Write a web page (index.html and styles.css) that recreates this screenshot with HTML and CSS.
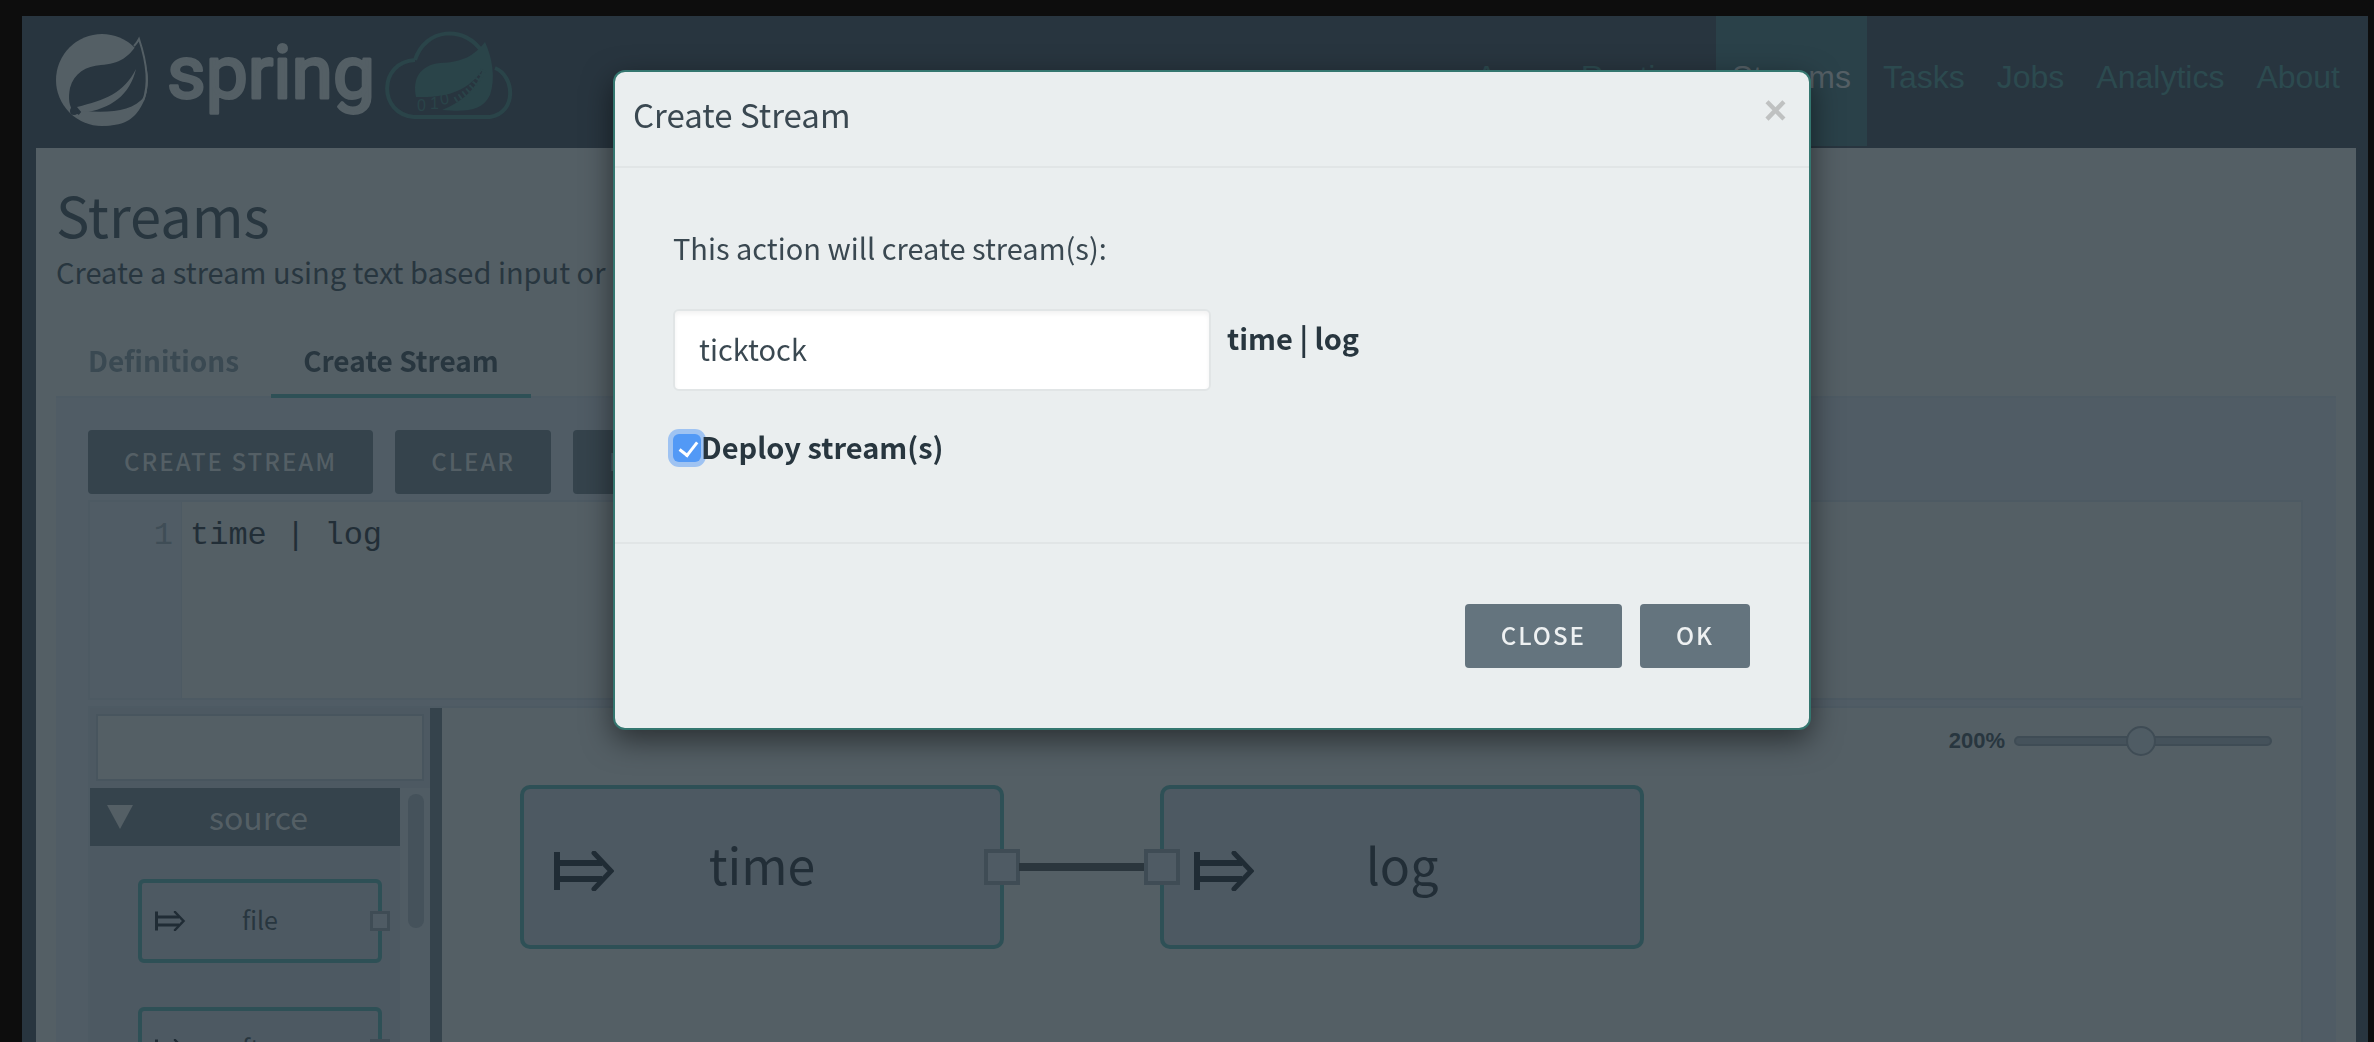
FILE: index.html
```
<!DOCTYPE html>
<html lang="en">
<head>
    <meta charset="UTF-8">
    <meta name="viewport" content="width=device-width, initial-scale=1.0">
    <title>Streams</title>
    <link rel="stylesheet" href="styles.css">
</head>
<body>
    <svg class="symbols" aria-hidden="true">
        <symbol id="arrow" viewBox="0 0 60 40">
            <path d="M3 1v38M3 12h45M3 28h45" fill="none" stroke="currentColor" stroke-width="6"/>
            <path d="M40 2l17 18-17 18" fill="none" stroke="currentColor" stroke-width="5" stroke-linecap="round"/>
        </symbol>
    </svg>

    <div class="app">
        <header class="navbar">
            <a href="#" class="brand" aria-label="spring">
                <svg width="470" height="100" viewBox="52 30 470 100">
                    <circle cx="102" cy="80" r="46" class="logo-fill"/>
                    <path class="logo-bg" d="M139 41c8 22 12 46 2 63-9 13-28 15-57 14l-10-6c-5-5-6-14-4-24 4-15 16-22 31-23 18-1 29-8 38-24z"/>
                    <path class="logo-line" d="M134 46q3-3 5-7c7 21 11 44 4 62"/>
                    <path class="logo-fill" d="M77 107c28-7 47-14 59-38-6 26-25 40-54 44z"/>
                    <path class="logo-fill" d="M82 111c28 2 50 1 63-15l2-8c0 10-8 26-18 32-13 8-37 8-52-3z"/>
                    <circle cx="74" cy="111" r="4" class="logo-bg"/>
                    <text x="167" y="98" class="logo-text">spring</text>
                    <g transform="translate(2 3)">
                        <path class="cloud-line" d="M413 57c10-32 50-36 68-7m12 15c20 8 22 45-5 49h-76c-36-3-36-55 1-57"/>
                        <path class="cloud-fill" d="M414 94c-4-18 4-32 24-34 23-1 34-7 45-21 7 15 11 36 5 53-8 16-23 17-48 15 22-9 35-22 41-41-15 22-35 29-67 28z"/>
                        <g class="cloud-digits">
                            <text x="415" y="108">0</text>
                            <text x="428" y="106">1</text>
                            <text x="439" y="102" transform="rotate(-10 439 102)">0</text>
                        </g>
                        <path class="digits-line" d="M453 97q20-12 29-31"/>
                    </g>
                </svg>
            </a>
            <nav class="menu">
                <a href="#">Apps</a>
                <a href="#">Runtime</a>
                <a href="#" class="active">Streams</a>
                <a href="#">Tasks</a>
                <a href="#">Jobs</a>
                <a href="#">Analytics</a>
                <a href="#">About</a>
            </nav>
        </header>

        <main class="content">
            <h1>Streams</h1>
            <p class="subtitle">Create a stream using text based input or</p>

            <div class="tabs">
                <a href="#" class="tab">Definitions</a>
                <a href="#" class="tab selected">Create Stream</a>
            </div>

            <div class="panel">
                <div class="toolbar">
                    <button class="btn">CREATE STREAM</button>
                    <button class="btn">CLEAR</button>
                    <button class="btn">LAYOUT</button>
                </div>

                <div class="editor">
                    <div class="gutter">1</div>
                    <pre class="code">time | log</pre>
                </div>

                <div class="designer">
                    <aside class="palette">
                        <div class="filter"><input type="text" aria-label="Filter"></div>
                        <div class="palette-body">
                            <div class="palette-list">
                                <div class="group">
                                    <svg width="26" height="24"><path d="M0 0h26L13 24z" fill="currentColor"/></svg>
                                    <span>source</span>
                                </div>
                                <div class="app-item">
                                    <svg class="arrow" width="32" height="20"><use href="#arrow"/></svg>
                                    <span>file</span>
                                    <i class="port"></i>
                                </div>
                                <div class="app-item">
                                    <svg class="arrow" width="32" height="20"><use href="#arrow"/></svg>
                                    <span>ftp</span>
                                    <i class="port"></i>
                                </div>
                            </div>
                            <div class="scroll"></div>
                        </div>
                    </aside>
                    <div class="splitter"></div>
                    <div class="canvas">
                        <div class="zoom">
                            <label for="zoom">200%</label>
                            <input type="range" id="zoom" min="0" max="100" value="49">
                        </div>
                        <div class="node node-time">
                            <svg class="arrow" width="60" height="40"><use href="#arrow"/></svg>
                            <span>time</span>
                            <i class="port out"></i>
                        </div>
                        <div class="link"></div>
                        <div class="node node-log">
                            <svg class="arrow" width="60" height="40"><use href="#arrow"/></svg>
                            <span>log</span>
                            <i class="port in"></i>
                        </div>
                    </div>
                </div>
            </div>
        </main>
    </div>

    <div class="overlay">
        <div class="modal" role="dialog" aria-labelledby="modalTitle">
            <div class="modal-header">
                <h2 id="modalTitle">Create Stream</h2>
                <button class="close" aria-label="Close">×</button>
            </div>
            <div class="modal-body">
                <p>This action will create stream(s):</p>
                <div class="stream-row">
                    <input type="text" id="streamName" value="ticktock">
                    <label for="streamName">time | log</label>
                </div>
                <div class="deploy-row">
                    <input type="checkbox" id="deploy" checked>
                    <label for="deploy">Deploy stream(s)</label>
                </div>
            </div>
            <div class="modal-footer">
                <button class="btn">CLOSE</button>
                <button class="btn">OK</button>
            </div>
        </div>
    </div>
</body>
</html>
```
FILE: styles.css
```
* {
    box-sizing: border-box;
}
body {
    margin: 0;
    padding: 16px 6px 0 22px;
    height: 100vh;
    overflow: hidden;
    background: #0d0d0d;
    color: #28363f;
    font-family: "Noto Sans CJK SC", "Open Sans", sans-serif;
    font-size: 29px;
    line-height: 40px;
}
h1, h2, p, pre {
    margin: 0;
    font-weight: 400;
}
a {
    color: inherit;
    text-decoration: none;
}
button, input {
    font-family: inherit;
}
.symbols {
    position: absolute;
    width: 0;
    height: 0;
}
.app {
    display: flex;
    flex-direction: column;
    height: 100%;
    background: #28353f;
}

/* top bar */
.navbar {
    display: flex;
    justify-content: space-between;
    height: 132px;
    padding: 0 12px 2px 30px;
}
.brand svg {
    display: block;
    margin-top: 14px;
}
.logo-fill {
    fill: #545f65;
}
.logo-bg {
    fill: #28353f;
}
.logo-line {
    fill: none;
    stroke: #545f65;
    stroke-width: 2;
}
.logo-text {
    font-family: Roboto, sans-serif;
    font-size: 75px;
    fill: #545f65;
    stroke: #545f65;
    stroke-width: 3;
    stroke-linejoin: round;
}
.cloud-line {
    fill: none;
    stroke: #2a4449;
    stroke-width: 4;
}
.cloud-fill {
    fill: #2a4449;
}
.cloud-digits {
    font-family: "Liberation Sans", sans-serif;
    font-size: 16px;
    fill: #2a4449;
}
.digits-line {
    fill: none;
    stroke: #2a4449;
    stroke-width: 6;
    stroke-dasharray: 2 3;
}
.menu {
    display: flex;
    font-family: "Liberation Sans", sans-serif;
    font-size: 32px;
    color: #2c4a4f;
}
.menu a {
    padding: 41px 16px 0;
}
.menu .active {
    background: #2a4149;
    color: #545f65;
}

/* page */
.content {
    display: flex;
    flex-direction: column;
    flex: 1;
    min-height: 0;
    margin: 0 12px 0 14px;
    padding: 32px 20px 0;
    background: #545f65;
}
h1 {
    font-size: 56px;
    line-height: 68px;
}
.subtitle {
    margin-top: 3px;
}
.tabs {
    position: relative;
    z-index: 1;
    display: flex;
    margin-top: 39px;
    font-size: 28px;
    font-weight: 700;
}
.tab {
    height: 68px;
    padding: 10px 32px 14px;
    color: #3a4952;
    border-bottom: 4px solid transparent;
}
.tab.selected {
    color: #28363f;
    border-bottom-color: #2e5056;
}
.panel {
    display: flex;
    flex-direction: column;
    flex: 1;
    min-height: 0;
    margin-top: -2px;
    padding: 32px 33px 0 32px;
    background: #505c65;
    border-top: 2px solid #4e5b64;
}
.toolbar {
    display: flex;
    gap: 22px;
}
.btn {
    height: 64px;
    padding: 0 36px 4px;
    border: 0;
    border-radius: 4px;
    background: #35434c;
    color: #545f65;
    font-size: 24px;
    font-weight: 500;
    letter-spacing: 2px;
}
.editor {
    display: flex;
    flex: none;
    height: 200px;
    margin-top: 6px;
    border: 2px solid #4d5a63;
    background: #545f65;
    font-family: "Liberation Mono", monospace;
    font-size: 32px;
}
.gutter {
    width: 92px;
    padding: 14px 8px 0;
    background: #505c65;
    border-right: 1px solid #4d5a63;
    color: #3f4d56;
    text-align: right;
}
.code {
    padding: 14px 8px;
    font-family: inherit;
    color: #222e37;
}
.designer {
    display: flex;
    flex: 1;
    min-height: 0;
    margin-top: 6px;
    border: 2px solid #4d5a63;
    border-bottom: 0;
    background: #545f65;
}
.palette {
    display: flex;
    flex-direction: column;
    width: 340px;
    background: #4d5962;
}
.filter {
    padding: 6px 6px 7px;
}
.filter input {
    display: block;
    width: 100%;
    height: 67px;
    border: 2px solid #48555e;
    background: #545f65;
}
.palette-body {
    display: flex;
    flex: 1;
    min-height: 0;
    overflow: hidden;
}
.palette-list {
    width: 310px;
}
.group {
    display: flex;
    align-items: center;
    height: 58px;
    padding: 0 16px 0 17px;
    background: #35434c;
    color: #545f65;
    font-size: 32px;
}
.group span {
    flex: 1;
    padding-bottom: 2px;
    text-align: center;
}
.scroll {
    width: 30px;
    padding: 6px 6px 0 8px;
    background: #505c64;
}
.scroll::before {
    content: "";
    display: block;
    height: 134px;
    border-radius: 8px;
    background: #45525b;
}
.app-item {
    position: relative;
    display: flex;
    align-items: center;
    width: 244px;
    height: 84px;
    margin: 33px 0 44px 48px;
    padding-left: 12px;
    border: 4px solid #2e5056;
    border-radius: 6px;
    font-size: 25px;
}
.app-item .arrow {
    margin-right: 56px;
}
.app-item span {
    padding-bottom: 4px;
}
.port {
    position: absolute;
    right: -12px;
    width: 20px;
    height: 20px;
    border: 3px solid #3f4c55;
    background: #4f5b64;
}
.arrow {
    color: #202c35;
}
.splitter {
    width: 12px;
    background: #35434c;
}

/* drawing area */
.canvas {
    position: relative;
    flex: 1;
}
.zoom {
    display: flex;
    justify-content: flex-end;
    align-items: center;
    gap: 9px;
    padding: 13px 29px 0;
    font-family: "Liberation Sans", sans-serif;
    font-size: 22px;
    font-weight: 700;
    line-height: 40px;
}
.zoom input {
    -webkit-appearance: none;
    appearance: none;
    width: 258px;
    height: 10px;
    margin: 0;
    border: 2px solid #3f4c55;
    border-radius: 5px;
    background: #45525b;
}
.zoom input::-webkit-slider-thumb {
    -webkit-appearance: none;
    width: 30px;
    height: 30px;
    border: 2px solid #3f4c55;
    border-radius: 50%;
    background: #4f5c64;
}
.node {
    position: absolute;
    top: 77px;
    width: 484px;
    height: 164px;
    border: 4px solid #2e5056;
    border-radius: 10px;
    background: #4d5962;
    color: #222e37;
    font-size: 50px;
    line-height: 148px;
    text-align: center;
}
.node-time {
    left: 78px;
}
.node-log {
    left: 718px;
}
.node .arrow {
    position: absolute;
    left: 30px;
    top: 62px;
}
.node .port {
    top: 60px;
    width: 36px;
    height: 36px;
    border-width: 4px;
}
.node .out {
    right: -20px;
}
.node .in {
    left: -20px;
}
.link {
    position: absolute;
    left: 577px;
    top: 155px;
    width: 126px;
    height: 8px;
    background: #2b363d;
}

/* modal */
.overlay {
    position: fixed;
    inset: 0;
    padding: 70px 0 0 50px;
}
.modal {
    width: 1198px;
    margin: 0 auto;
    border: 2px solid #34766f;
    border-radius: 12px;
    background: #eaeeef;
    box-shadow: 0 10px 30px rgba(0, 0, 0, 0.5);
    color: #3a4851;
}
.modal-header {
    display: flex;
    justify-content: space-between;
    height: 96px;
    padding: 22px 22px 0 18px;
    border-bottom: 2px solid #e1e5e6;
}
.modal-header h2 {
    font-size: 33px;
}
.close {
    height: 32px;
    padding: 0;
    border: 0;
    background: none;
    color: #bfc1c1;
    font-family: "Liberation Sans", sans-serif;
    font-size: 40px;
    font-weight: 700;
    line-height: 32px;
}
.modal-body {
    height: 376px;
    padding: 59px 58px 0;
    border-bottom: 2px solid #e1e5e6;
}
.stream-row {
    display: flex;
    gap: 16px;
    margin-top: 42px;
    color: #28363f;
    font-weight: 700;
}
.stream-row input {
    width: 538px;
    height: 82px;
    padding: 0 24px 5px;
    border: 2px solid #e1e5e6;
    border-radius: 6px;
    background: #fff;
    box-shadow: inset 0 3px 4px rgba(0, 0, 0, 0.05);
    color: #3a4851;
    font-size: 29px;
}
.stream-row label {
    padding-top: 8px;
}
.deploy-row {
    display: flex;
    align-items: center;
    margin-top: 35px;
    color: #28363f;
    font-weight: 700;
}
.deploy-row label {
    padding-bottom: 4px;
}
.deploy-row input {
    -webkit-appearance: none;
    appearance: none;
    width: 28px;
    height: 28px;
    margin: 0;
    border-radius: 6px;
    background: #5299f6;
    box-shadow: 0 0 0 5px #9fc3f2;
}
.deploy-row input:checked::before {
    content: "";
    display: block;
    width: 8px;
    height: 15px;
    margin: 4px 10px;
    border: solid #fff;
    border-width: 0 3px 3px 0;
    transform: rotate(38deg);
}
.modal-footer {
    display: flex;
    justify-content: flex-end;
    gap: 18px;
    height: 184px;
    padding: 60px 59px 0;
}
.modal .btn {
    background: #64747e;
    color: #eef1f2;
}
```
